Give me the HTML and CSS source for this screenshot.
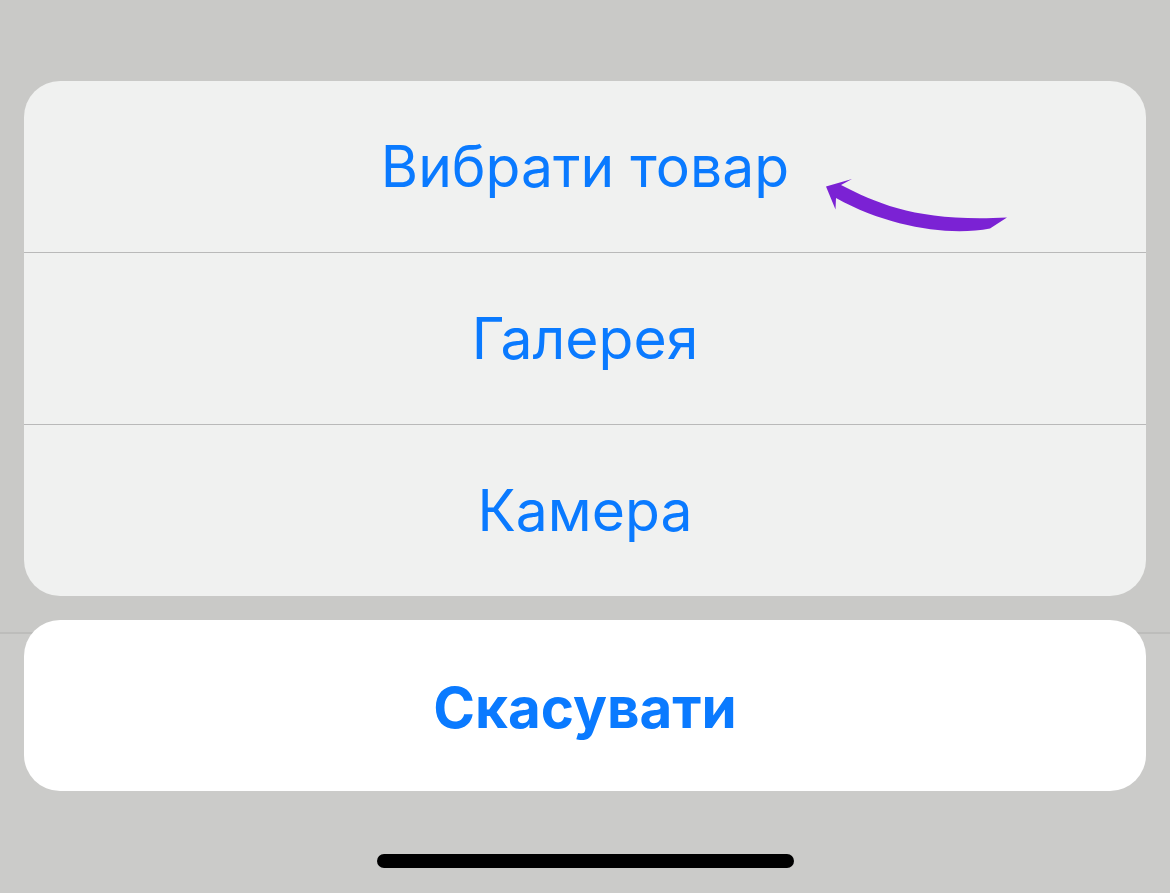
FILE: index.html
```html
<!DOCTYPE html>
<html lang="uk">
<head>
<meta charset="utf-8">
<link rel="stylesheet" href="styles.css">
</head>
<body>
<div class="screen">
  <div class="sheet">
    <div class="group">
      <div class="row"><span class="label">Вибрати товар</span></div>
      <div class="row"><span class="label">Галерея</span></div>
      <div class="row"><span class="label">Камера</span></div>
      <svg class="arrow" viewBox="800 150 230 100" width="230" height="100" aria-hidden="true">
        <path d="M826,186.5 L852,179 L841,185 C880,205 920,222 1007,217.5 L990,228.5 C950,236 890,228 836,198 L835.5,209.5 Z" fill="#7b22d4"/>
      </svg>
    </div>
    <div class="cancel"><span class="label bold">Скасувати</span></div>
  </div>
  <div class="home-bar"></div>
</div>
</body>
</html>
```
FILE: styles.css
```css
* { box-sizing: border-box; }
html, body { margin: 0; padding: 0; }
body {
  width: 1170px;
  height: 893px;
  background: #c9c9c7;
  font-family: Inter, "Noto Sans", "DejaVu Sans", sans-serif;
  overflow: hidden;
}
.screen {
  width: 1170px;
  height: 893px;
  display: flex;
  flex-direction: column;
  align-items: center;
  padding-top: 81px;
  background: linear-gradient(#c9c9c7 0, #c9c9c7 632px, #bdbdbb 632px, #bdbdbb 634px, #cbcbc9 634px);
}
.sheet {
  width: 1122px;
  display: flex;
  flex-direction: column;
  gap: 24px;
}
.group {
  position: relative;
  background: #f0f1f0;
  border-radius: 36px;
  overflow: hidden;
}
.row {
  height: 172px;
  display: flex;
  align-items: center;
  justify-content: center;
  border-top: 1px solid #b9b9b9;
}
.row:first-child { border-top: none; height: 171px; }
.label {
  color: #0a7aff;
  font-size: 57px;
  letter-spacing: 0;
  line-height: 1;
}
.bold { font-weight: 700; font-size: 56.5px; }
.cancel {
  height: 171px;
  padding-top: 6px;
  background: #ffffff;
  border-radius: 36px;
  display: flex;
  align-items: center;
  justify-content: center;
}
.arrow {
  position: absolute;
  left: 776px;
  top: 69px;
}
.home-bar {
  margin-top: 63px;
  width: 417px;
  height: 14px;
  border-radius: 7px;
  background: #000;
}
```
